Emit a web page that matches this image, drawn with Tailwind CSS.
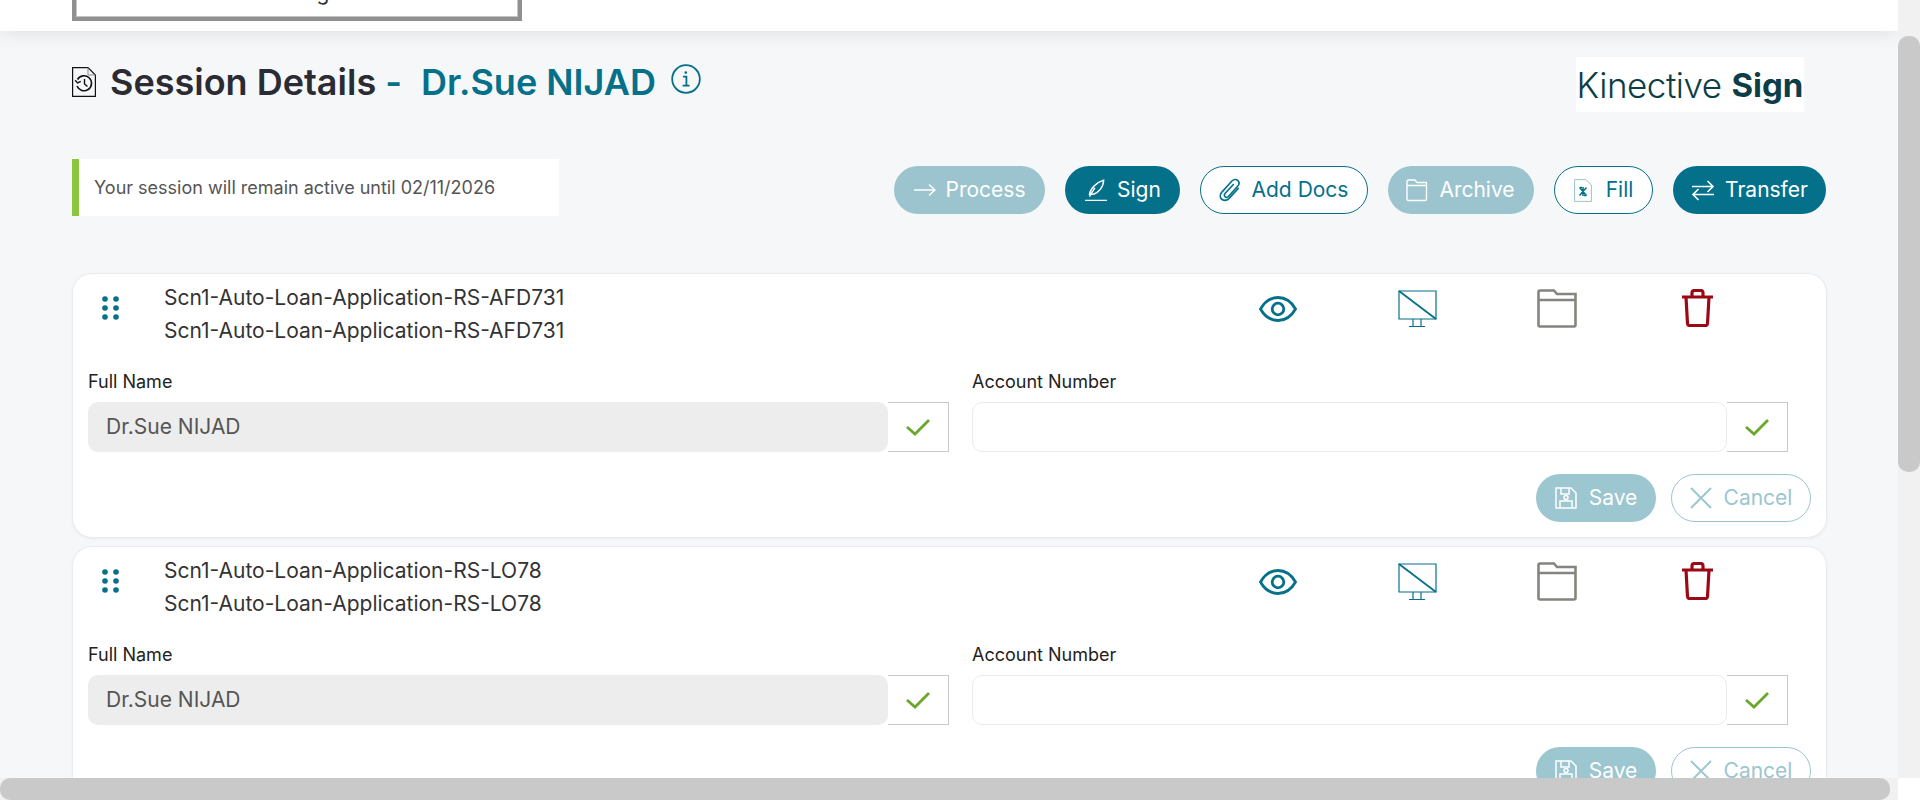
<!DOCTYPE html>
<html lang="en">
  <head>
    <meta charset="UTF-8" />
    <meta name="viewport" content="width=device-width, initial-scale=1.0" />
    <title>Session Details</title>
    <script src="https://cdn.jsdelivr.net/npm/@tailwindcss/browser@4"></script>
  </head>
  <body class="h-screen overflow-hidden bg-white font-['Inter',sans-serif]">
    <div class="grid h-[800px] w-[1920px] grid-cols-[1898px_22px] grid-rows-[778px_22px]">
      <!-- page -->
      <div class="overflow-hidden bg-[#f6f7f9]">
        <header class="h-[31px] bg-white pl-[72px] shadow-[0_4px_16px_rgba(0,0,0,0.08)]">
          <div class="h-[21px] w-[450px] overflow-hidden border-x-4 border-b-4 border-[#909090] bg-white pl-[222px] shadow-[inset_1px_-1px_0_#c4c4c4,inset_-1px_0_0_#c4c4c4]">
            <p class="-mt-[18px] text-[21px] leading-[21px] text-[#333]">Sign</p>
          </div>
        </header>

        <div class="flex items-start justify-between pl-[72px] pr-[94px] pt-[26px]">
          <div class="flex items-start">
            <svg class="mt-[10px] h-[30px] w-[24px]" viewBox="0 0 24 30" fill="none" stroke="#111" stroke-width="1.2">
              <path d="M.6.6H16L23.4 8V29.4H.6Z" />
              <path d="M16 .6V8H23.4" stroke="#888" stroke-width="1" />
              <path d="M5.5 12.5A7.5 7.5 0 1 1 5 19" stroke-width="1.6" />
              <path d="M3.2 13.2 5.6 16 8.8 14.4" stroke-width="1.4" />
              <path d="M12.5 12V17L15.5 19.5" stroke-width="1.4" />
            </svg>
            <h1 class="ml-[14px] mt-[1px] text-[36px] leading-[48px] font-semibold text-[#2b2b33]">Session Details</h1>
            <span class="ml-[9px] mt-[1px] text-[36px] leading-[48px] font-semibold text-[#05708a]">-</span>
            <span class="ml-[19px] mt-[1px] text-[36px] leading-[48px] font-semibold text-[#05708a]">Dr.Sue NIJAD</span>
            <svg class="ml-[15px] mt-[7px] h-[30px] w-[30px]" viewBox="0 0 30 30" fill="none" stroke="#05708a" stroke-width="1.8">
              <circle cx="15" cy="15" r="13.8" />
              <circle cx="14.8" cy="8.6" r="1.3" fill="#05708a" stroke="none" />
              <path d="M12 12.6H15.4V21.4M11.6 21.6H18.6" />
            </svg>
          </div>
          <div class="flex h-[55px] w-[228px] items-center justify-center bg-white pt-[1px] text-[35px] leading-none text-[#0d3d47]">
            <span class="font-light tracking-[-0.5px]">Kinective</span>&nbsp;<span class="text-[33px] font-bold">Sign</span>
          </div>
        </div>

        <div class="mt-[47px] flex items-start justify-between pl-[72px] pr-[72px]">
          <div class="flex h-[57px] w-[487px] items-center border-l-[7px] border-[#8cc63f] bg-white pl-[15px] text-lg text-[#555]">Your session will remain active until 02/11/2026</div>
          <div class="mt-[7px] flex gap-[20px]">
            <button class="flex h-[48px] w-[151px] items-center justify-center gap-[10px] rounded-full bg-[#9bc4ce] text-[21px] text-white">
              <svg class="h-[22px] w-[22px]" viewBox="0 0 22 22" fill="none" stroke="currentColor" stroke-width="1.4"><path d="M0 11H21M15 5.5 21 11 15 16.5" /></svg>
              Process
            </button>
            <button class="flex h-[48px] w-[115px] items-center justify-center gap-[9px] rounded-full bg-[#05708a] text-[21px] text-white">
              <svg class="h-[24px] w-[24px]" viewBox="0 0 22 22" fill="none" stroke="currentColor" stroke-width="1.3"><path d="M5 15C6 9 12 4 18 2 18 8 13 14 8 15ZM5 17 10 9M1 20.5H21" /></svg>
              Sign
            </button>
            <button class="flex h-[48px] w-[168px] items-center justify-center gap-[9px] rounded-full border border-[#05708a] bg-white pr-[3px] text-[21px] text-[#05708a]">
              <svg class="h-[26px] w-[26px]" viewBox="0 0 24 24" fill="none" stroke="currentColor" stroke-width="1.5"><path d="M20 10 11 20C9 22 5.500 22 4 20.200 2.500 18.500 2.800 15.800 4.500 14L14 3.500C15.500 2 18 2 19.300 3.300 20.800 4.800 20.500 7 19 8.500L10.500 18C9.500 19 8.200 19 7.400 18.200 6.600 17.400 6.800 16 7.600 15L15.500 6.500" /></svg>
              Add Docs
            </button>
            <button class="flex h-[48px] w-[146px] items-center justify-center gap-[10px] rounded-full bg-[#9bc4ce] pr-[2px] text-[21px] text-white">
              <svg class="h-[24px] w-[24px]" viewBox="0 0 24 24" fill="none" stroke="currentColor" stroke-width="1.4"><path d="M2 4C2 3 2.500 2 3.500 2H10L12 4.500H21.500V21C21.500 22 21 22.500 20 22.500H3.500C2.500 22.500 2 22 2 21ZM2 7.500H21.500" /></svg>
              Archive
            </button>
            <button class="flex h-[48px] w-[99px] items-center justify-center gap-[14px] rounded-full border border-[#05708a] bg-white text-[21px] text-[#05708a]">
              <svg class="h-[23px] w-[18px]" viewBox="0 0 18 23" fill="none"><path d="M.6.6H12L17.400 6V22.400H.6Z" stroke="#9bc4ce" /><path d="M5.500 8.500 12.500 16.500M12.500 8.500 5.500 16.500M9 8V17M6 8.500H8M10 16.500H12.500" stroke="#05708a" stroke-width="1.500" /></svg>
              Fill
            </button>
            <button class="flex h-[48px] w-[153px] items-center justify-center gap-[10px] rounded-full bg-[#05708a] text-[21px] text-white">
              <svg class="h-[24px] w-[24px]" viewBox="0 0 24 24" fill="none" stroke="currentColor" stroke-width="1.600"><path d="M1 8.500H22M16.500 3 22 8.500 16.500 14M23 16.500H2M7.500 11 2 16.500 7.500 22" /></svg>
              Transfer
            </button>
          </div>
        </div>

        <div class="ml-[72px] mt-[57px] flex w-[1755px] flex-col gap-[8px]">
          <!-- document card -->
          <section class="h-[265px] rounded-[20px] border border-[#e9ebee] bg-white shadow-[0_1px_3px_rgba(0,0,0,0.05)]">
            <div class="flex h-[96px]">
              <svg class="ml-[28px] mt-[21px] h-[26px] w-[20px]" viewBox="0 0 20 26" fill="#05708a"><circle cx="4" cy="4" r="2.800" /><circle cx="15" cy="4" r="2.800" /><circle cx="4" cy="13" r="2.800" /><circle cx="15" cy="13" r="2.800" /><circle cx="4" cy="22" r="2.800" /><circle cx="15" cy="22" r="2.800" /></svg>
              <div class="ml-[43px] mt-[7px] text-[21px] leading-[33px] text-[#333]">
                <p>Scn1-Auto-Loan-Application-RS-AFD731</p>
                <p>Scn1-Auto-Loan-Application-RS-AFD731</p>
              </div>
              <div class="ml-auto flex">
                <svg class="mr-[101px] mt-[22px] h-[26px] w-[38px]" viewBox="0 0 38 26" fill="none" stroke="#05708a" stroke-width="2.800"><path d="M1.500 13C6 5 12 1.500 19 1.500S32 5 36.500 13C32 21 26 24.500 19 24.500S6 21 1.500 13Z" /><circle cx="19" cy="13" r="5.800" /></svg>
                <svg class="mr-[99px] mt-[16px] h-[38px] w-[40px]" viewBox="0 0 40 38" fill="none" stroke="#05708a" stroke-width="1.200"><path d="M1 1H38V29H1ZM15 29V36M23 29V36M11 36.500H27" /><path d="M1 1 38 29" stroke-width="1.800" /></svg>
                <svg class="mr-[104px] mt-[15px] h-[39px] w-[40px]" viewBox="0 0 40 39" fill="none" stroke="#85857f" stroke-width="2.600"><path d="M1.500 3C1.500 2 2 1.500 3 1.500H17L20 5H38.500V36C38.500 37 38 37.500 37 37.500H3C2 37.500 1.500 37 1.500 36ZM1.500 11H38.500" /></svg>
                <svg class="mr-[112px] mt-[15px] h-[38px] w-[33px]" viewBox="0 0 33 38" fill="none" stroke="#9b0a14" stroke-width="3.200"><path d="M1 8H32M5 8 6.500 34.500C6.600 36 7.500 36.500 8.500 36.500H24.500C25.500 36.500 26.400 36 26.500 34.500L28 8M11 8V4C11 2.500 12 1.500 13.500 1.500H19.500C21 1.500 22 2.500 22 4V8" /></svg>
              </div>
            </div>
            <div class="flex pl-[15px]">
              <div class="w-[861px]">
                <label class="mt-[1px] block text-lg leading-[22px] text-[#222]">Full Name</label>
                <div class="mt-[9px] flex h-[50px]">
                  <div class="flex w-[800px] items-center rounded-[10px] bg-[#ededed] pl-[18px] text-[21px] text-[#555]">Dr.Sue NIJAD</div>
                  <div class="flex w-[61px] items-center justify-center border border-l-0 border-[#c8c8c8]"><svg class="h-[18px] w-[24px]" viewBox="0 0 24 18" fill="none" stroke="#6aa72b" stroke-width="2.800"><path d="M1 9 9 16 23 2" /></svg></div>
                </div>
              </div>
              <div class="ml-[23px] w-[816px]">
                <label class="mt-[1px] block text-lg leading-[22px] text-[#222]">Account Number</label>
                <div class="mt-[9px] flex h-[50px]">
                  <div class="w-[755px] rounded-[10px] border border-[#e9ebee] bg-white"></div>
                  <div class="flex w-[61px] items-center justify-center border border-l-0 border-[#c8c8c8]"><svg class="h-[18px] w-[24px]" viewBox="0 0 24 18" fill="none" stroke="#6aa72b" stroke-width="2.800"><path d="M1 9 9 16 23 2" /></svg></div>
                </div>
              </div>
            </div>
            <div class="mr-[15px] mt-[22px] flex justify-end gap-[15px]">
              <button class="flex h-[48px] w-[120px] items-center justify-center gap-[12px] rounded-full bg-[#9cc6d0] text-[21px] text-white">
                <svg class="h-[22px] w-[22px]" viewBox="0 0 22 22" fill="none" stroke="currentColor" stroke-width="1.500"><path d="M1 1H16L21 6V21H1ZM6 1V7H14V1M5 21V14H17V21" /><circle cx="11" cy="10.500" r="2" /></svg>
                Save
              </button>
              <button class="flex h-[48px] w-[140px] items-center justify-center gap-[12px] rounded-full border border-[#9cc6d0] bg-white text-[21px] text-[#9cc6d0]">
                <svg class="h-[22px] w-[22px]" viewBox="0 0 22 22" fill="none" stroke="currentColor" stroke-width="2"><path d="M1 1 21 21M21 1 1 21" /></svg>
                Cancel
              </button>
            </div>
          </section>

          <section class="h-[265px] rounded-[20px] border border-[#e9ebee] bg-white shadow-[0_1px_3px_rgba(0,0,0,0.05)]">
            <div class="flex h-[96px]">
              <svg class="ml-[28px] mt-[21px] h-[26px] w-[20px]" viewBox="0 0 20 26" fill="#05708a"><circle cx="4" cy="4" r="2.800" /><circle cx="15" cy="4" r="2.800" /><circle cx="4" cy="13" r="2.800" /><circle cx="15" cy="13" r="2.800" /><circle cx="4" cy="22" r="2.800" /><circle cx="15" cy="22" r="2.800" /></svg>
              <div class="ml-[43px] mt-[7px] text-[21px] leading-[33px] text-[#333]">
                <p>Scn1-Auto-Loan-Application-RS-LO78</p>
                <p>Scn1-Auto-Loan-Application-RS-LO78</p>
              </div>
              <div class="ml-auto flex">
                <svg class="mr-[101px] mt-[22px] h-[26px] w-[38px]" viewBox="0 0 38 26" fill="none" stroke="#05708a" stroke-width="2.800"><path d="M1.500 13C6 5 12 1.500 19 1.500S32 5 36.500 13C32 21 26 24.500 19 24.500S6 21 1.500 13Z" /><circle cx="19" cy="13" r="5.800" /></svg>
                <svg class="mr-[99px] mt-[16px] h-[38px] w-[40px]" viewBox="0 0 40 38" fill="none" stroke="#05708a" stroke-width="1.200"><path d="M1 1H38V29H1ZM15 29V36M23 29V36M11 36.500H27" /><path d="M1 1 38 29" stroke-width="1.800" /></svg>
                <svg class="mr-[104px] mt-[15px] h-[39px] w-[40px]" viewBox="0 0 40 39" fill="none" stroke="#85857f" stroke-width="2.600"><path d="M1.500 3C1.500 2 2 1.500 3 1.500H17L20 5H38.500V36C38.500 37 38 37.500 37 37.500H3C2 37.500 1.500 37 1.500 36ZM1.500 11H38.500" /></svg>
                <svg class="mr-[112px] mt-[15px] h-[38px] w-[33px]" viewBox="0 0 33 38" fill="none" stroke="#9b0a14" stroke-width="3.200"><path d="M1 8H32M5 8 6.500 34.500C6.600 36 7.500 36.500 8.500 36.500H24.500C25.500 36.500 26.400 36 26.500 34.500L28 8M11 8V4C11 2.500 12 1.500 13.500 1.500H19.500C21 1.500 22 2.500 22 4V8" /></svg>
              </div>
            </div>
            <div class="flex pl-[15px]">
              <div class="w-[861px]">
                <label class="mt-[1px] block text-lg leading-[22px] text-[#222]">Full Name</label>
                <div class="mt-[9px] flex h-[50px]">
                  <div class="flex w-[800px] items-center rounded-[10px] bg-[#ededed] pl-[18px] text-[21px] text-[#555]">Dr.Sue NIJAD</div>
                  <div class="flex w-[61px] items-center justify-center border border-l-0 border-[#c8c8c8]"><svg class="h-[18px] w-[24px]" viewBox="0 0 24 18" fill="none" stroke="#6aa72b" stroke-width="2.800"><path d="M1 9 9 16 23 2" /></svg></div>
                </div>
              </div>
              <div class="ml-[23px] w-[816px]">
                <label class="mt-[1px] block text-lg leading-[22px] text-[#222]">Account Number</label>
                <div class="mt-[9px] flex h-[50px]">
                  <div class="w-[755px] rounded-[10px] border border-[#e9ebee] bg-white"></div>
                  <div class="flex w-[61px] items-center justify-center border border-l-0 border-[#c8c8c8]"><svg class="h-[18px] w-[24px]" viewBox="0 0 24 18" fill="none" stroke="#6aa72b" stroke-width="2.800"><path d="M1 9 9 16 23 2" /></svg></div>
                </div>
              </div>
            </div>
            <div class="mr-[15px] mt-[22px] flex justify-end gap-[15px]">
              <button class="flex h-[48px] w-[120px] items-center justify-center gap-[12px] rounded-full bg-[#9cc6d0] text-[21px] text-white">
                <svg class="h-[22px] w-[22px]" viewBox="0 0 22 22" fill="none" stroke="currentColor" stroke-width="1.500"><path d="M1 1H16L21 6V21H1ZM6 1V7H14V1M5 21V14H17V21" /><circle cx="11" cy="10.500" r="2" /></svg>
                Save
              </button>
              <button class="flex h-[48px] w-[140px] items-center justify-center gap-[12px] rounded-full border border-[#9cc6d0] bg-white text-[21px] text-[#9cc6d0]">
                <svg class="h-[22px] w-[22px]" viewBox="0 0 22 22" fill="none" stroke="currentColor" stroke-width="2"><path d="M1 1 21 21M21 1 1 21" /></svg>
                Cancel
              </button>
            </div>
          </section>
        </div>
      </div>

      <!-- scrollbars -->
      <div class="bg-[#f1f1f1] pt-[36px]">
        <div class="h-[436px] rounded-[10px] bg-[#c9c9c9]"></div>
      </div>
      <div class="bg-[#f1f1f1]">
        <div class="h-[22px] w-[1890px] rounded-[10px] bg-[#c9c9c9]"></div>
      </div>
      <div class="bg-white"></div>
    </div>
  </body>
</html>
